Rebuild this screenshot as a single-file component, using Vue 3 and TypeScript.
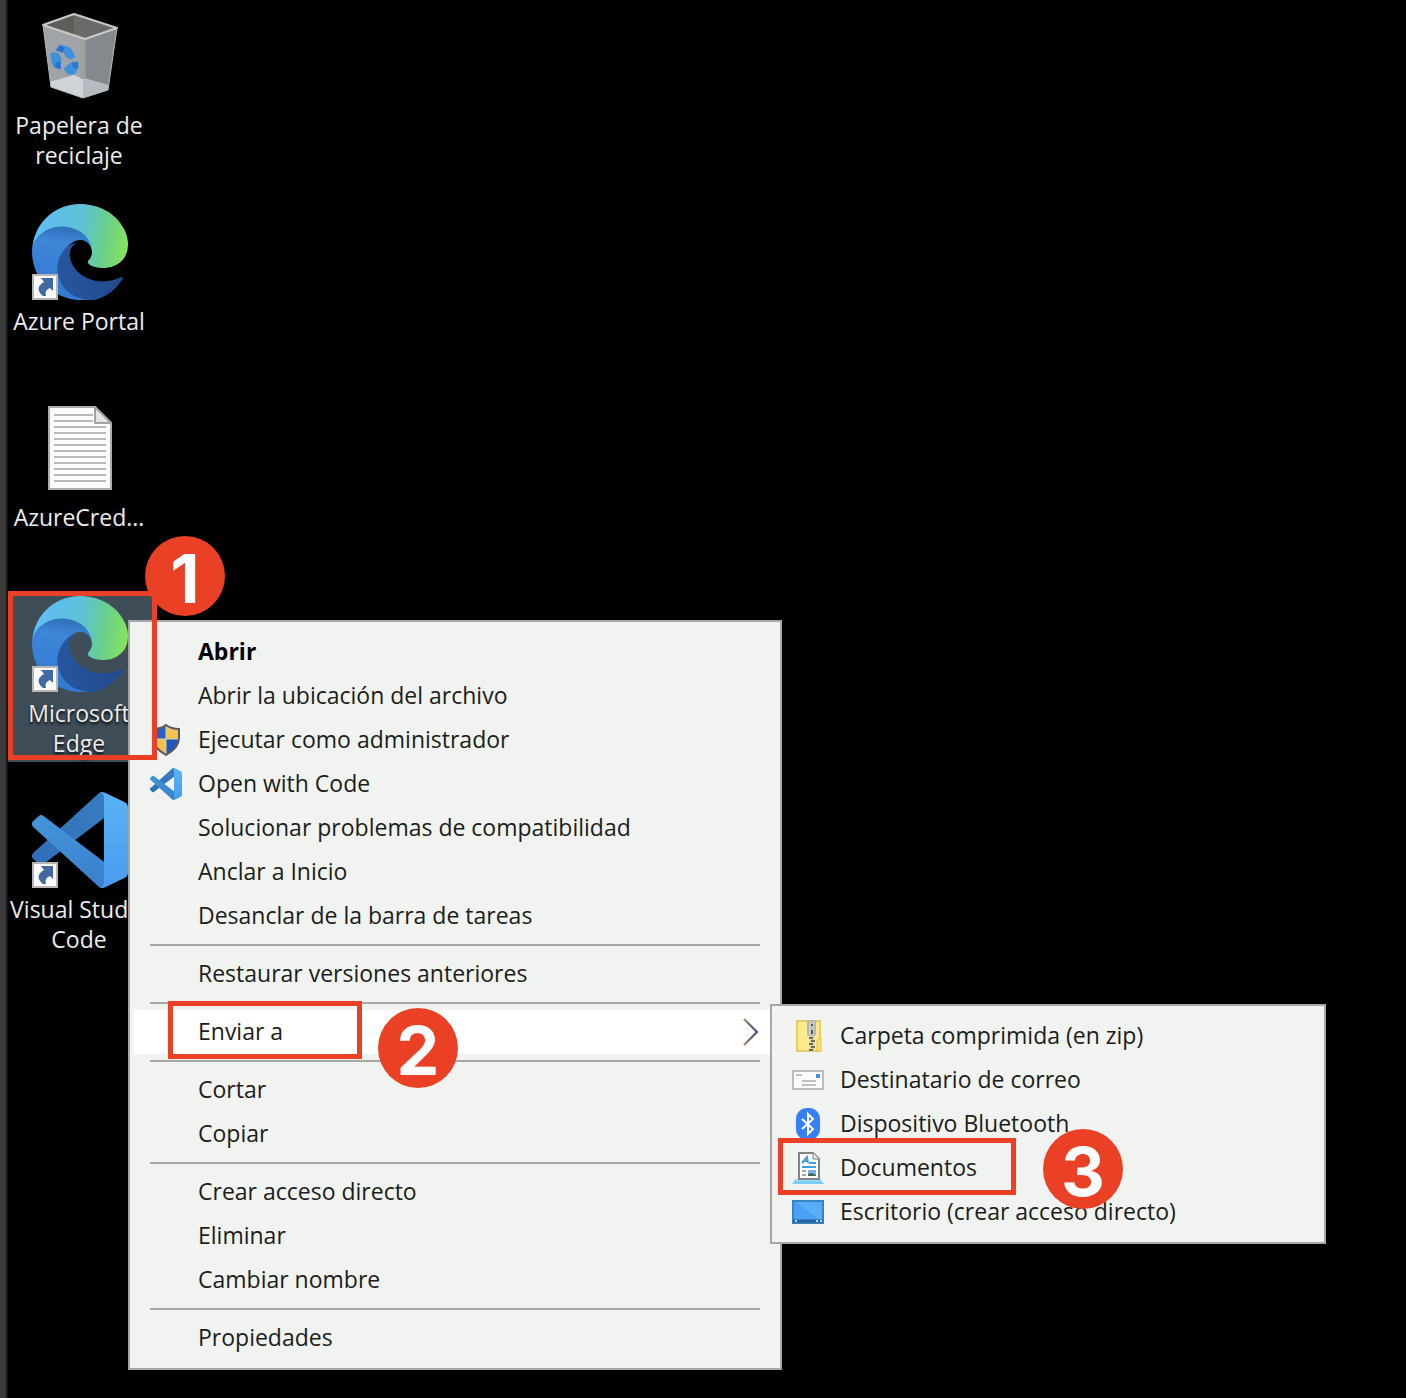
<script setup lang="ts">
interface DesktopItem {
  label: string
  icon: string
  shortcut: boolean
  selected: boolean
}

interface MenuItem {
  label: string
  icon?: string
  primary?: boolean
  children?: MenuItem[]
}

const desktopItems: DesktopItem[] = [
  { label: 'Papelera de reciclaje', icon: 'bin', shortcut: false, selected: false },
  { label: 'Azure Portal', icon: 'edge', shortcut: true, selected: false },
  { label: 'AzureCred...', icon: 'textfile', shortcut: false, selected: false },
  { label: 'Microsoft Edge', icon: 'edge', shortcut: true, selected: true },
  { label: 'Visual Studio Code', icon: 'vscode', shortcut: true, selected: false },
]

const sendTo: MenuItem[] = [
  { label: 'Carpeta comprimida (en zip)', icon: 'zip' },
  { label: 'Destinatario de correo', icon: 'mail' },
  { label: 'Dispositivo Bluetooth', icon: 'bluetooth' },
  { label: 'Documentos', icon: 'documents' },
  { label: 'Escritorio (crear acceso directo)', icon: 'screen' },
]

const groups: MenuItem[][] = [
  [
    { label: 'Abrir', primary: true },
    { label: 'Abrir la ubicación del archivo' },
    { label: 'Ejecutar como administrador', icon: 'shield' },
    { label: 'Open with Code', icon: 'vscode' },
    { label: 'Solucionar problemas de compatibilidad' },
    { label: 'Anclar a Inicio' },
    { label: 'Desanclar de la barra de tareas' },
  ],
  [{ label: 'Restaurar versiones anteriores' }],
  [{ label: 'Enviar a', children: sendTo }],
  [{ label: 'Cortar' }, { label: 'Copiar' }],
  [{ label: 'Crear acceso directo' }, { label: 'Eliminar' }, { label: 'Cambiar nombre' }],
  [{ label: 'Propiedades' }],
]
</script>

<template>
  <svg class="defs" width="0" height="0" aria-hidden="true">
    <defs>
      <linearGradient id="edge-top" x1="0" y1="0.5" x2="1" y2="0.6">
        <stop offset="0" stop-color="#62bdf8" />
        <stop offset="0.5" stop-color="#5cc2d6" />
        <stop offset="0.75" stop-color="#69cf8b" />
        <stop offset="1" stop-color="#86e45d" />
      </linearGradient>
      <linearGradient id="edge-mid" x1="0.4" y1="0" x2="0.3" y2="1">
        <stop offset="0" stop-color="#2c6bae" />
        <stop offset="0.25" stop-color="#3d86d8" />
        <stop offset="1" stop-color="#3079d2" />
      </linearGradient>
      <linearGradient id="edge-low" x1="0" y1="0" x2="1" y2="0">
        <stop offset="0" stop-color="#27579f" />
        <stop offset="1" stop-color="#224a8c" />
      </linearGradient>
      <linearGradient id="code-back" x1="0" y1="1" x2="1" y2="0">
        <stop offset="0" stop-color="#2f6db8" />
        <stop offset="1" stop-color="#3a80c2" />
      </linearGradient>
      <linearGradient id="code-front" x1="0" y1="0" x2="1" y2="1">
        <stop offset="0" stop-color="#4495d9" />
        <stop offset="1" stop-color="#3a7ccb" />
      </linearGradient>
      <linearGradient id="code-side" x1="0" y1="0" x2="0" y2="1">
        <stop offset="0" stop-color="#58b3f3" />
        <stop offset="1" stop-color="#4b9bf0" />
      </linearGradient>
      <linearGradient id="screen-fill" x1="0" y1="1" x2="1" y2="0">
        <stop offset="0" stop-color="#4ba3f8" />
        <stop offset="0.5" stop-color="#4aa0f5" />
        <stop offset="0.55" stop-color="#5cb0fa" />
        <stop offset="1" stop-color="#52a8f8" />
      </linearGradient>
      <linearGradient id="chevron-fill" x1="0" y1="0" x2="1" y2="0">
        <stop offset="0" stop-color="#b98a5a" />
        <stop offset="0.5" stop-color="#5a5c7c" />
        <stop offset="1" stop-color="#3c4c82" />
      </linearGradient>
    </defs>

    <symbol id="icon-bin" viewBox="0 0 96 96">
      <path d="M11 17 53 31 51 90 19 79Z" fill="#a0a3a8" />
      <path d="M53 31 85 20 76 82 51 90Z" fill="#85888c" />
      <path d="M11 17 42 6 85 20 53 31Z" fill="#6a6b69" />
      <path d="M11 17 42 6 42 27Z" fill="#5c5e59" />
      <path d="M18 74 42 67 51 71 51 90 19 79Z" fill="#d0d4d9" />
      <path d="M42 67 77 77 76 82 51 90 51 70Z" fill="#b4bcc1" />
      <path d="M42 67 51 90 19 79 18 74Z" fill="#d0d4d9" />
      <path d="M51 31v40" stroke="#9da29c" stroke-width="5" />
      <path d="M11 17 42 6 85 20 53 31Z" fill="none" stroke="#c9cac8" stroke-width="2" stroke-linejoin="round" />
      <path d="M11 17 19 79 51 90 76 82 85 20" fill="none" stroke="#b7babb" stroke-width="1" />
      <g fill="#3f8fdf" stroke="#3f8fdf" stroke-width="1" stroke-linejoin="round">
        <path d="M24 42 28 37 38 40 43 49 39 51 34 49 32 44Z" />
        <path d="M19 45 26 45 29 51 28 61 22 59 19 50Z" />
        <path d="M32 61 36 57 41 54 46 54 46 60 42 66 36 66Z" />
      </g>
      <path d="M24 42 28 37 33 40 30 45ZM23 55 28 53 29 61 24 60ZM40 55 46 54 46 60 41 60Z" fill="#2f72cd" />
    </symbol>

    <symbol id="icon-edge" viewBox="0 0 256 256">
      <path fill="url(#edge-low)" d="M235.68 195.46a93.73 93.73 0 0 1-10.54 4.71 101.87 101.87 0 0 1-35.9 6.46c-47.32 0-88.54-32.55-88.54-74.32a31.48 31.48 0 0 1 16.43-27.31c-42.8 1.8-53.8 46.4-53.8 72.53 0 73.88 68.09 81.37 82.76 81.37 7.91 0 19.84-2.3 27-4.56l1.31-.44a128.34 128.34 0 0 0 66.6-52.8 4 4 0 0 0-5.32-5.64z" />
      <path fill="url(#edge-mid)" d="M105.73 241.42a79.2 79.2 0 0 1-22.74-21.34 80.72 80.72 0 0 1 29.53-120c3.12-1.47 8.45-4.13 15.54-4a32.35 32.35 0 0 1 25.69 13 31.88 31.88 0 0 1 6.36 18.66c0-.21 24.46-79.6-80-79.6-43.9 0-80 41.66-80 78.21a130.15 130.15 0 0 0 12.11 56 128 128 0 0 0 156.38 67.11 75.55 75.55 0 0 1-62.78-8z" />
      <path fill="url(#edge-top)" d="M152.33 148.86c-.81 1.05-3.3 2.5-3.3 5.66 0 2.61 1.7 5.12 4.72 7.23 14.38 10 41.49 8.68 41.56 8.68a59.56 59.56 0 0 0 30.27-8.35 61.38 61.38 0 0 0 30.43-52.88c.26-22.41-8-37.31-11.34-43.91C223.48 23.83 177.74 0 128 0A128 128 0 0 0 0 126.2c.48-36.54 36.8-66.05 80-66.05 3.5 0 23.46.34 42 10.07 16.34 8.58 24.9 18.94 30.85 29.21 6.18 10.67 7.28 24.15 7.28 29.52s-2.74 13.33-7.8 19.91z" />
    </symbol>

    <symbol id="icon-textfile" viewBox="0 0 96 96">
      <path d="M17 7H63L79 23V89H17Z" fill="#fcfdfd" stroke="#a9afaf" stroke-width="2" />
      <path d="M63 7V23H79Z" fill="#e4e6e6" stroke="#a0a4a4" stroke-width="2" stroke-linejoin="round" />
      <path d="M22 15H61M22 21H61M22 27H74M22 33H74M22 39H74M22 45H74M22 51H74M22 57H74M22 63H74M22 69H74M22 75H74M22 81H74" stroke="#b9bbba" stroke-width="2" />
    </symbol>

    <symbol id="icon-vscode" viewBox="0 0 100 100">
      <path fill="url(#code-back)" d="M96.46 10.8 75.86.88A6.23 6.23 0 0 0 68.75 2.08L1.3 63.58A4.17 4.17 0 0 0 1.3 69.75L6.81 74.75A4.17 4.17 0 0 0 12.13 74.99L93.36 13.37C96.09 11.3 100 13.25 100 16.67V16.43C100 14.03 98.62 11.84 96.46 10.8Z" />
      <path fill="url(#code-front)" d="M96.46 89.2 75.86 99.12A6.23 6.23 0 0 1 68.75 97.92L1.3 36.42A4.17 4.17 0 0 1 1.3 30.25L6.81 25.25A4.17 4.17 0 0 1 12.13 25.01L93.36 86.63C96.09 88.7 100 86.75 100 83.33V83.57C100 85.97 98.62 88.16 96.46 89.2Z" />
      <path fill="url(#code-side)" d="M75.86 99.13A6.23 6.23 0 0 1 68.75 97.92C71.06 100.22 75 98.59 75 95.33V4.67C75 1.41 71.06-.22 68.75 2.08A6.23 6.23 0 0 1 75.86.87L96.46 10.78A6.25 6.25 0 0 1 100 16.41V83.59A6.25 6.25 0 0 1 96.46 89.22Z" />
    </symbol>

    <symbol id="icon-shortcut" viewBox="0 0 26 26">
      <rect x="1" y="1" width="24" height="24" fill="#fafafa" stroke="#b9b5b0" stroke-width="2" />
      <path d="M9 4H21V17L18 14C14 16 13 18 14 22H11C5 17 5 12 12 8Z" fill="#43689f" />
    </symbol>

    <symbol id="icon-shield" viewBox="0 0 32 32">
      <path d="M16 1C12 4 8 5 3 5V14C3 22 9 27 16 31C23 27 29 22 29 14V5C24 5 20 4 16 1Z" fill="#f6c14d" />
      <path d="M16 1C12 4 8 5 3 5V15H16Z" fill="#2962c4" />
      <path d="M16 15H29C29 22 23 27 16 31Z" fill="#2257b9" />
      <path d="M16 1V31M3 15H29" stroke="#c9d6c0" stroke-width="1" />
      <path d="M16 1C12 4 8 5 3 5V14C3 22 9 27 16 31C23 27 29 22 29 14V5C24 5 20 4 16 1Z" fill="none" stroke="#545b5e" stroke-width="2" />
    </symbol>

    <symbol id="icon-zip" viewBox="0 0 32 32">
      <rect x="5" y="1" width="23" height="30" fill="#fbe98f" stroke="#e8cd62" stroke-width="2" />
      <path d="M25 31V21L27 18H29V31Z" fill="#f9df76" stroke="#e3c04c" stroke-width="1" />
      <rect x="15" y="0" width="9" height="16" rx="2" fill="#b4b4b0" />
      <path d="M18 1V15M21 1V15" stroke="#e6e6e2" stroke-width="1" />
      <path d="M19 4h2v2h-2zM19 10h2v4h-2z" fill="#555" />
      <path d="M20 16V32" stroke="#d6d0b0" stroke-width="5" />
      <path d="M17 18H21M19 21H23M17 24H21M19 27H23M17 30H21" stroke="#6f6d60" stroke-width="2" />
    </symbol>

    <symbol id="icon-mail" viewBox="0 0 32 32">
      <rect x="1" y="7" width="30" height="18" fill="#fbfbfb" stroke="#bdbdbd" stroke-width="2" />
      <path d="M4 11H10M10 17H24M10 21H24" stroke="#c0c0c0" stroke-width="2" />
      <rect x="24" y="10" width="4" height="4" fill="#3e93f0" />
    </symbol>

    <symbol id="icon-bluetooth" viewBox="0 0 32 32">
      <rect x="4" y="0" width="24" height="32" rx="11" fill="#3680f6" />
      <path d="M10 11 21 21 16 26V6L21 11 10 21" fill="none" stroke="#fff" stroke-width="2" />
    </symbol>

    <symbol id="icon-documents" viewBox="0 0 32 32">
      <path d="M4 27H28L32 32H0Z" fill="#7cccf8" />
      <path d="M4 27H28L30 29H2Z" fill="#a9dcf8" />
      <path d="M7 1H21L27 7V27H7Z" fill="#fdfdfd" stroke="#7f8485" stroke-width="2" />
      <path d="M21 1V7H27" fill="#e4e4e4" stroke="#7f8485" stroke-width="1" />
      <path d="M10 11 15 5 16 11M12 9H16M17 11H24M10 15H24" fill="none" stroke="#3f9fe0" stroke-width="2" />
      <path d="M10 19H14M10 23H14" stroke="#a7a7a7" stroke-width="2" />
      <rect x="16" y="18" width="8" height="6" fill="#7db0ec" />
      <path d="M16 22 20 21 24 23V24H16Z" fill="#3c6b58" />
    </symbol>

    <symbol id="icon-screen" viewBox="0 0 32 32">
      <rect x="1" y="5" width="30" height="22" fill="url(#screen-fill)" stroke="#3b83bf" stroke-width="2" />
      <path d="M1 25H31" stroke="#2463a0" stroke-width="3" />
      <path d="M3 25H5M24 25H26M28 25H30" stroke="#b5dbf6" stroke-width="2" />
    </symbol>
  </svg>

  <main class="desktop">
    <ul class="shortcuts">
      <li v-for="item in desktopItems" :key="item.label" class="slot">
        <button type="button" class="shortcut" :class="{ selected: item.selected }">
          <span class="picture">
            <svg class="glyph"><use :href="`#icon-${item.icon}`" /></svg>
            <svg v-if="item.shortcut" class="arrow"><use href="#icon-shortcut" /></svg>
          </span>
          <span class="caption">{{ item.label }}</span>
        </button>
      </li>
    </ul>

    <div class="menu context" role="menu">
      <div v-for="(group, g) in groups" :key="g" class="group" role="group">
        <div v-for="item in group" :key="item.label" class="entry" :class="{ open: item.children }">
          <button type="button" class="row" :class="{ primary: item.primary }" role="menuitem">
            <span class="mark">
              <svg v-if="item.icon" class="small"><use :href="`#icon-${item.icon}`" /></svg>
            </span>
            <span class="text">{{ item.label }}</span>
            <svg v-if="item.children" class="chevron" viewBox="0 0 18 28">
              <path d="M2 1 15 14 2 27" fill="none" stroke="url(#chevron-fill)" stroke-width="2" />
            </svg>
          </button>
          <div v-if="item.children" class="menu submenu" role="menu">
            <button v-for="child in item.children" :key="child.label" type="button" class="row" role="menuitem">
              <span class="mark">
                <svg class="small"><use :href="`#icon-${child.icon}`" /></svg>
              </span>
              <span class="text">{{ child.label }}</span>
            </button>
          </div>
        </div>
      </div>
    </div>

    <div class="frame frame-one"></div>
    <div class="frame frame-two"></div>
    <div class="frame frame-three"></div>
    <span class="step step-one">1</span>
    <span class="step step-two">2</span>
    <span class="step step-three">3</span>
  </main>
</template>

<style>
body {
  margin: 0;
  background: #000;
}
</style>

<style scoped>
.defs {
  position: absolute;
}

.desktop {
  position: relative;
  box-sizing: border-box;
  min-height: 100vh;
  overflow: hidden;
  border-left: 6px solid #3b3b3b;
  background: #000;
  box-shadow: inset 2px 0 #151515;
  font-family: 'Open Sans', 'Noto Sans', sans-serif;
  font-size: 23px;
}

button {
  margin: 0;
  border: 0;
  background: none;
  font: inherit;
  color: inherit;
}

.shortcuts {
  display: flex;
  flex-direction: column;
  gap: 32px;
  width: 144px;
  margin: 0;
  padding: 8px 0 0 2px;
  list-style: none;
}

.slot {
  height: 164px;
}

.shortcut {
  display: flex;
  flex-direction: column;
  align-items: center;
  gap: 6px;
  width: 100%;
  padding: 0 0 4px;
  color: #ececec;
}

.selected {
  background: #3f4d58;
}

.picture {
  position: relative;
  display: block;
  width: 96px;
  height: 96px;
}

.glyph {
  display: block;
  width: 96px;
  height: 96px;
}

.arrow {
  position: absolute;
  left: 0;
  bottom: 0;
  width: 26px;
  height: 26px;
}

.caption {
  display: block;
  box-sizing: border-box;
  width: 144px;
  padding-right: 2px;
  line-height: 30px;
  text-align: center;
}

.selected .caption {
  text-shadow: 0 2px 3px #000;
}

.menu {
  position: absolute;
  box-sizing: border-box;
  padding: 8px 4px;
  border: 2px solid #a6a8a6;
  background: #f0f3ef;
  color: #1c1d1c;
}

.context {
  left: 122px;
  top: 620px;
  width: 654px;
}

.submenu {
  left: calc(100% - 6px);
  top: -6px;
  width: 556px;
}

.group + .group::before {
  content: '';
  display: block;
  height: 2px;
  margin: 6px 16px;
  background: #a6a8a6;
}

.entry {
  position: relative;
}

.open {
  background: #fff;
}

.row {
  display: flex;
  align-items: center;
  gap: 16px;
  width: 100%;
  height: 44px;
  padding: 0 16px;
  text-align: left;
}

.primary {
  font-weight: 700;
  color: #000;
}

.mark,
.small {
  display: block;
  flex: none;
  width: 32px;
  height: 32px;
}

.text {
  flex: 1;
  padding-bottom: 2px;
  line-height: 30px;
  white-space: nowrap;
}

.chevron {
  width: 18px;
  height: 28px;
}

.frame {
  position: absolute;
  box-sizing: border-box;
  border: 5px solid #ea4126;
}

.frame-one {
  left: 2px;
  top: 591px;
  width: 149px;
  height: 169px;
}

.frame-two {
  left: 162px;
  top: 1001px;
  width: 194px;
  height: 58px;
}

.frame-three {
  left: 772px;
  top: 1138px;
  width: 238px;
  height: 57px;
}

.step {
  position: absolute;
  width: 80px;
  height: 80px;
  border-radius: 50%;
  background: #ea4126;
  color: #fff;
  font: 700 68px/84px Inter, 'Liberation Sans', sans-serif;
  text-align: center;
}

.step-one {
  left: 139px;
  top: 536px;
}

.step-two {
  left: 372px;
  top: 1008px;
}

.step-three {
  left: 1037px;
  top: 1129px;
}
</style>
